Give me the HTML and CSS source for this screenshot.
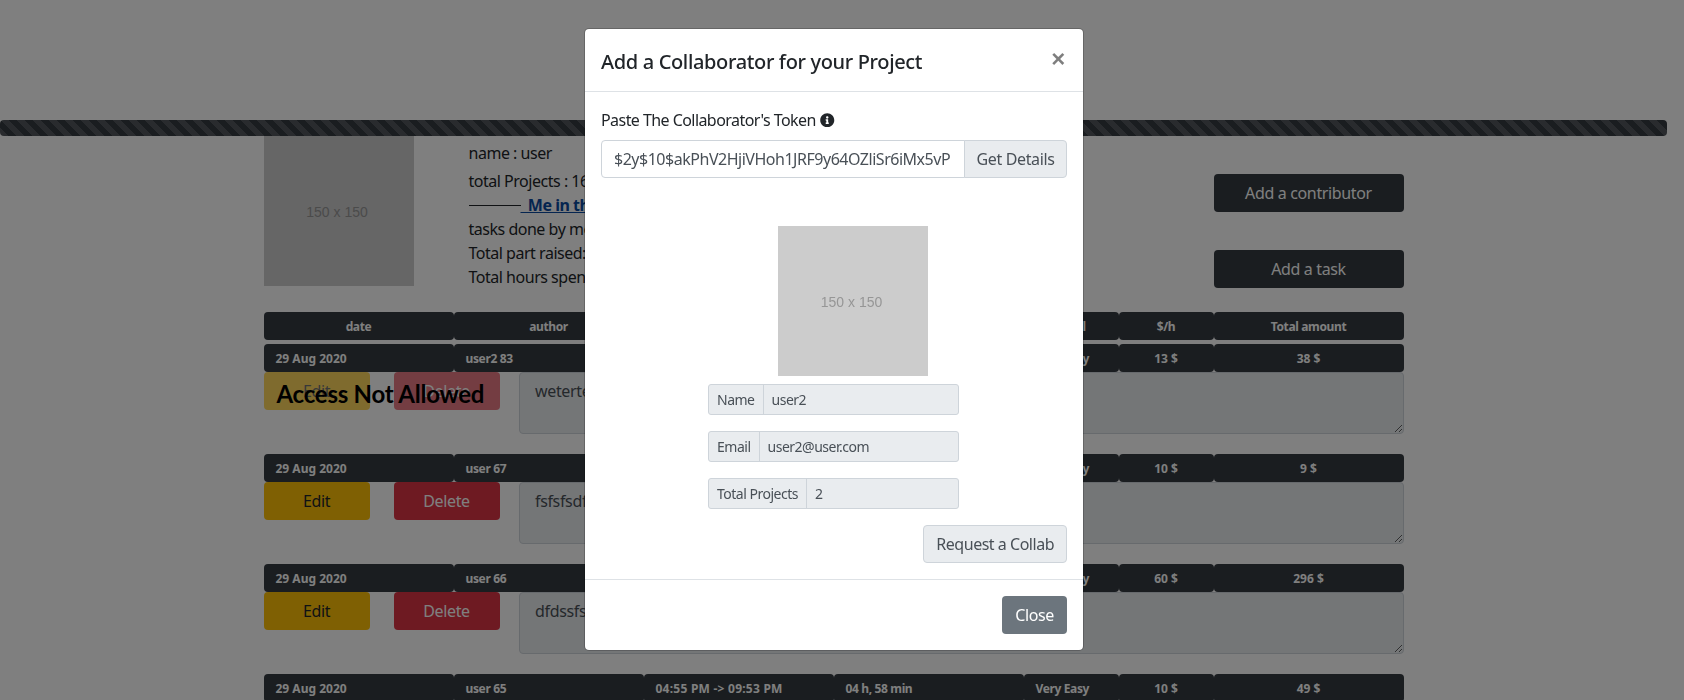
FILE: index.html
```html
<!DOCTYPE html>
<html lang="en">
<head>
    <meta charset="UTF-8">
    <title>Project</title>
    <link rel="stylesheet" href="styles.css">
</head>
<body>
    <div class="progress-bar"></div>

    <div class="container">
        <div class="summary">
            <div class="placeholder">150 x 150</div>
            <div class="infos">
                <p class="name-line">name : user</p>
                <p>total Projects : 16</p>
                <p><span class="dash"></span><a class="me-link" href="#">&nbsp;&nbsp;Me in this project</a></p>
                <p>tasks done by me : 4</p>
                <p>Total part raised: 90 $</p>
                <p>Total hours spent : 12 h</p>
            </div>
            <div class="actions">
                <button class="btn btn-dark">Add a contributor</button>
                <button class="btn btn-dark">Add a task</button>
            </div>
        </div>

        <div class="row row-head">
            <div class="cell c2 center">date</div>
            <div class="cell c2 center">author</div>
            <div class="cell c2 center">time</div>
            <div class="cell c2 center">duration</div>
            <div class="cell c1 center">Level</div>
            <div class="cell c1 center">$/h</div>
            <div class="cell c2 center">Total amount</div>
        </div>

        <div class="task">
            <div class="row">
                <div class="cell c2 num">29 Aug 2020</div>
                <div class="cell c2">user2 83</div>
                <div class="cell c2 time">02:12 PM -&gt; 05:10 PM</div>
                <div class="cell c2">02 h, 58 min</div>
                <div class="cell c1">Very Easy</div>
                <div class="cell c1 center num">13 $</div>
                <div class="cell c2 center num">38 $</div>
            </div>
            <div class="task-body">
                <button class="btn btn-edit locked">Edit</button>
                <button class="btn btn-delete locked">Delete</button>
                <textarea class="notes" readonly>wetertetrt</textarea>
                <div class="not-allowed">Access Not Allowed</div>
            </div>
        </div>

        <div class="task">
            <div class="row">
                <div class="cell c2 num">29 Aug 2020</div>
                <div class="cell c2">user 67</div>
                <div class="cell c2 time">01:10 PM -&gt; 02:05 PM</div>
                <div class="cell c2">00 h, 55 min</div>
                <div class="cell c1">Very Easy</div>
                <div class="cell c1 center num">10 $</div>
                <div class="cell c2 center num">9 $</div>
            </div>
            <div class="task-body">
                <button class="btn btn-edit">Edit</button>
                <button class="btn btn-delete">Delete</button>
                <textarea class="notes" readonly>fsfsfsdfsdf</textarea>
            </div>
        </div>

        <div class="task">
            <div class="row">
                <div class="cell c2 num">29 Aug 2020</div>
                <div class="cell c2">user 66</div>
                <div class="cell c2 time">10:00 AM -&gt; 02:56 PM</div>
                <div class="cell c2">04 h, 56 min</div>
                <div class="cell c1">Very Easy</div>
                <div class="cell c1 center num">60 $</div>
                <div class="cell c2 center num">296 $</div>
            </div>
            <div class="task-body">
                <button class="btn btn-edit">Edit</button>
                <button class="btn btn-delete">Delete</button>
                <textarea class="notes" readonly>dfdssfsdf</textarea>
            </div>
        </div>

        <div class="task">
            <div class="row">
                <div class="cell c2 num">29 Aug 2020</div>
                <div class="cell c2">user 65</div>
                <div class="cell c2 time">04:55 PM -&gt; 09:53 PM</div>
                <div class="cell c2">04 h, 58 min</div>
                <div class="cell c1">Very Easy</div>
                <div class="cell c1 center num">10 $</div>
                <div class="cell c2 center num">49 $</div>
            </div>
        </div>
    </div>

    <div class="backdrop"></div>

    <div class="modal">
        <div class="modal-header">
            <h5>Add a Collaborator for your Project</h5>
            <span class="close">&times;</span>
        </div>
        <div class="modal-body">
            <label class="token-label">Paste The Collaborator's Token
                <svg class="info-icon" viewBox="0 0 512 512"><path fill="currentColor" d="M256 8C119.043 8 8 119.083 8 256c0 136.997 111.043 248 248 248s248-111.003 248-248C504 119.083 392.957 8 256 8zm0 110c23.196 0 42 18.804 42 42s-18.804 42-42 42-42-18.804-42-42 18.804-42 42-42zm56 254c0 6.627-5.373 12-12 12h-88c-6.627 0-12-5.373-12-12v-24c0-6.627 5.373-12 12-12h12v-64h-12c-6.627 0-12-5.373-12-12v-24c0-6.627 5.373-12 12-12h64c6.627 0 12 5.373 12 12v100h12c6.627 0 12 5.373 12 12v24z"/></svg>
            </label>
            <div class="token-group">
                <input class="token-input" type="text" value="$2y$10$akPhV2HjiVHoh1JRF9y64OZliSr6iMx5vP">
                <button class="token-btn">Get Details</button>
            </div>

            <div class="placeholder modal-img">150 x 150</div>

            <div class="detail"><span class="detail-key">Name</span><span class="detail-val">user2</span></div>
            <div class="detail"><span class="detail-key">Email</span><span class="detail-val">user2@user.com</span></div>
            <div class="detail"><span class="detail-key">Total Projects</span><span class="detail-val">2</span></div>

            <div class="request-line">
                <button class="btn btn-light">Request a Collab</button>
            </div>
        </div>
        <div class="modal-footer">
            <button class="btn btn-secondary">Close</button>
        </div>
    </div>
</body>
</html>
```

FILE: styles.css
```css
* {
    box-sizing: border-box;
}
html, body {
    height: 700px;
    overflow: hidden;
}
body {
    margin: 0;
    padding: 120px 17px 0 0;
    font-family: "Noto Sans", Arial, sans-serif;
    font-size: 16px;
    line-height: 1.5;
    letter-spacing: -0.022em;
    color: #212529;
    background-color: #fff;
}
button, input, textarea {
    font-family: inherit;
    letter-spacing: inherit;
}

.progress-bar {
    height: 16px;
    border-radius: 4px;
    background-color: #343a40;
    background-image: linear-gradient(45deg, rgba(255,255,255,.15) 25%, transparent 25%, transparent 50%, rgba(255,255,255,.15) 50%, rgba(255,255,255,.15) 75%, transparent 75%, transparent);
    background-size: 16px 16px;
}

.container {
    width: 1140px;
    margin: 0 auto;
}
.summary {
    display: flex;
    height: 176px;
}
.placeholder {
    width: 150px;
    height: 150px;
    flex: none;
    display: flex;
    align-items: center;
    justify-content: center;
    padding: 2px 3px 0 0;
    background-color: #ccc;
    color: #969696;
    font-family: "Liberation Sans", Arial, sans-serif;
    font-size: 14px;
    letter-spacing: 0;
}
.infos {
    flex: 1;
    padding: 5px 0 0 55px;
    letter-spacing: -0.03em;
}
.infos p {
    margin: 0;
    height: 24px;
}
.infos .name-line {
    height: 28px;
}
.dash {
    display: inline-block;
    width: 52px;
    border-top: 1px solid #212529;
    vertical-align: 5px;
}
.me-link {
    color: #0a4aa0;
    font-weight: bold;
    text-decoration: underline;
}
.actions {
    width: 190px;
    padding-top: 38px;
    display: flex;
    flex-direction: column;
    gap: 38px;
}

.btn {
    height: 38px;
    padding: 0 12px;
    border: 1px solid transparent;
    border-radius: 4px;
    font-size: 16px;
}
.btn-dark {
    width: 190px;
    background-color: #343a40;
    color: #fff;
}
.btn-edit {
    width: 106px;
    background-color: #ffc107;
    color: #212529;
}
.btn-delete {
    width: 106px;
    background-color: #dc3545;
    color: #fff;
}
.btn-light {
    background-color: #e9ecef;
    border-color: #ced4da;
    color: #495057;
    letter-spacing: -0.03em;
}
.btn-secondary {
    background-color: #6c757d;
    color: #fff;
}
.locked {
    opacity: .65;
}

.row {
    display: flex;
    height: 28px;
}
.row-head {
    margin-bottom: 4px;
}
.cell {
    height: 28px;
    padding: 1px 12px 0;
    border-radius: 4px;
    background-color: #343a40;
    color: #fff;
    font-size: 12px;
    font-weight: bold;
    line-height: 27px;
    letter-spacing: -0.03em;
    white-space: nowrap;
}
.cell.num {
    letter-spacing: 0;
}
.cell.time {
    letter-spacing: 0.02em;
}
.c1 {
    width: 95px;
}
.c2 {
    width: 190px;
}
.center {
    text-align: center;
}

.task {
    margin-bottom: 20px;
}
.task-body {
    position: relative;
    display: flex;
    align-items: flex-start;
    gap: 24px;
}
.notes {
    flex: 1;
    height: 62px;
    margin-left: -4.5px;
    padding: 6px 15px;
    border: 1px solid #ced4da;
    border-radius: 4px;
    background-color: #e9ecef;
    color: #495057;
    font-size: 16px;
    line-height: 1.5;
}
.not-allowed {
    position: absolute;
    left: 13px;
    top: 4px;
    font-family: Lato, "Noto Sans", sans-serif;
    font-size: 24px;
    font-weight: bold;
    line-height: 36px;
    letter-spacing: -0.01em;
    color: #000;
}

.backdrop {
    position: fixed;
    inset: 0;
    background-color: rgba(0, 0, 0, .5);
}

.modal {
    position: fixed;
    top: 28px;
    left: 584px;
    width: 500px;
    border: 1px solid rgba(0, 0, 0, .2);
    border-radius: 5px;
    background-clip: padding-box;
    background-color: #fff;
}
.modal-header {
    display: flex;
    justify-content: space-between;
    height: 63px;
    padding: 16px;
    border-bottom: 1px solid #dee2e6;
}
.modal-header h5 {
    margin: 2px 0 0;
    font-size: 20px;
    font-weight: 500;
    line-height: 30px;
}
.close {
    margin-right: 2px;
    font-family: "Liberation Sans", Arial, sans-serif;
    font-size: 24px;
    font-weight: bold;
    line-height: 28px;
    color: #000;
    opacity: .5;
}
.modal-body {
    padding: 16px;
}
.token-label {
    display: block;
    margin-bottom: 8px;
    letter-spacing: -0.035em;
}
.info-icon {
    width: 14.5px;
    height: 14.5px;
    vertical-align: -1px;
    margin-left: 1px;
}
.token-group {
    display: flex;
    height: 38px;
}
.token-input {
    flex: 1;
    min-width: 0;
    padding: 6px 12px;
    border: 1px solid #ced4da;
    border-radius: 4px 0 0 4px;
    font-size: 16px;
    letter-spacing: -0.03em;
    color: #495057;
}
.token-btn {
    width: 103px;
    margin-left: -1px;
    border: 1px solid #ced4da;
    border-radius: 0 4px 4px 0;
    background-color: #e9ecef;
    color: #495057;
    font-size: 16px;
}
.modal-img {
    margin: 48px 0 8px 177px;
}
.detail {
    display: flex;
    width: 251px;
    height: 31px;
    margin: 0 0 16px 107px;
    border: 1px solid #ced4da;
    border-radius: 3px;
    background-color: #e9ecef;
    color: #495057;
    font-size: 14px;
    line-height: 29px;
    letter-spacing: -0.035em;
}
.detail-key {
    padding: 0 8px;
    border-right: 1px solid #ced4da;
}
.detail-val {
    padding: 0 8px;
}
.request-line {
    display: flex;
    justify-content: flex-end;
}
.modal-footer {
    display: flex;
    justify-content: flex-end;
    padding: 16px;
    border-top: 1px solid #dee2e6;
}
```
